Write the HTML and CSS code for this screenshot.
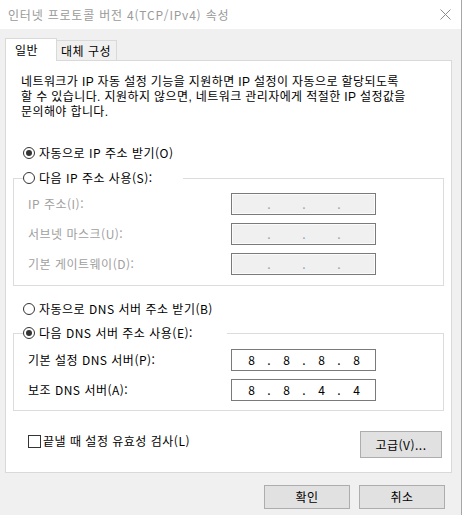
FILE: index.html
```html
<!DOCTYPE html>
<html lang="ko">
<head>
<meta charset="utf-8">
<title>인터넷 프로토콜 버전 4(TCP/IPv4) 속성</title>
<link rel="stylesheet" href="styles.css">
</head>
<body>
<div class="window">
  <div class="titlebar">
    <span class="title">인터넷 프로토콜 버전 4(TCP/IPv4) 속성</span>
    <svg class="close" width="11" height="11" viewBox="0 0 11 11"><path d="M0.5 0.5L10.5 10.5M10.5 0.5L0.5 10.5" stroke="#8c8c8c" stroke-width="1" fill="none"/></svg>
  </div>
  <div class="client">
    <div class="tabs">
      <div class="tab active">일반</div>
      <div class="tab">대체 구성</div>
    </div>
    <div class="panel">
      <div class="desc">
        <div class="desc-line">네트워크가 IP 자동 설정 기능을 지원하면 IP 설정이 자동으로 할당되도록</div>
        <div class="desc-line">할 수 있습니다. 지원하지 않으면, 네트워크 관리자에게 적절한 IP 설정값을</div>
        <div class="desc-line">문의해야 합니다.</div>
      </div>

      <div class="option first"><span class="radio checked"></span><span class="opt-text">자동으로 IP 주소 받기(O)</span></div>

      <fieldset class="group g-ip">
        <legend class="option legend-ip"><span class="radio"></span><span class="opt-text">다음 IP 주소 사용(S):</span></legend>
        <div class="fields">
          <span class="lbl disabled">IP 주소(I):</span>
          <div class="ipbox off"><span class="seg"></span><span class="dot">.</span><span class="seg"></span><span class="dot">.</span><span class="seg"></span><span class="dot">.</span><span class="seg"></span></div>
          <span class="lbl disabled">서브넷 마스크(U):</span>
          <div class="ipbox off"><span class="seg"></span><span class="dot">.</span><span class="seg"></span><span class="dot">.</span><span class="seg"></span><span class="dot">.</span><span class="seg"></span></div>
          <span class="lbl disabled">기본 게이트웨이(D):</span>
          <div class="ipbox off"><span class="seg"></span><span class="dot">.</span><span class="seg"></span><span class="dot">.</span><span class="seg"></span><span class="dot">.</span><span class="seg"></span></div>
        </div>
      </fieldset>

      <div class="option dns-auto"><span class="radio"></span><span class="opt-text">자동으로 DNS 서버 주소 받기(B)</span></div>

      <fieldset class="group g-dns">
        <legend class="option legend-dns"><span class="radio checked"></span><span class="opt-text">다음 DNS 서버 주소 사용(E):</span></legend>
        <div class="fields">
          <span class="lbl">기본 설정 DNS 서버(P):</span>
          <div class="ipbox"><span class="seg">8</span><span class="dot">.</span><span class="seg">8</span><span class="dot">.</span><span class="seg">8</span><span class="dot">.</span><span class="seg">8</span></div>
          <span class="lbl">보조 DNS 서버(A):</span>
          <div class="ipbox"><span class="seg">8</span><span class="dot">.</span><span class="seg">8</span><span class="dot">.</span><span class="seg">4</span><span class="dot">.</span><span class="seg">4</span></div>
        </div>
      </fieldset>

      <div class="bottom-row">
        <label class="check"><span class="box"></span><span class="opt-text">끝낼 때 설정 유효성 검사(L)</span></label>
        <button class="btn adv" type="button">고급(V)...</button>
      </div>
    </div>
    <div class="footer">
      <button class="btn" type="button">확인</button>
      <button class="btn" type="button">취소</button>
    </div>
  </div>
</div>
</body>
</html>
```
FILE: styles.css
```css
* { box-sizing: border-box; }

html, body {
  margin: 0;
  padding: 0;
  background: #f0f0f0;
}

body {
  font-family: "Noto Sans CJK KR", "Noto Sans", sans-serif;
  font-size: 12px;
  letter-spacing: 0.5px;
  color: #000;
  width: 462px;
  height: 515px;
  overflow: hidden;
}

.window {
  width: 462px;
  height: 515px;
  border-right: 1px solid #a6a6a6;
  background: #f0f0f0;
}

.titlebar {
  height: 29px;
  background: #fff;
  display: flex;
  align-items: center;
  justify-content: space-between;
  padding: 0 10px 0 8px;
}

.title {
  color: #9a9a9a;
  font-size: 12px;
  line-height: 16px;
  letter-spacing: 0.8px;
}

.close { display: block; }

.client {
  padding: 9px 9px 0 5px;
}

.tabs {
  display: flex;
  align-items: flex-end;
  height: 22px;
}

.tab {
  line-height: 18px;
  border: 1px solid #d9d9d9;
  border-bottom: none;
  white-space: nowrap;
}

.tab.active {
  width: 52px;
  height: 23px;
  margin-bottom: -1px;
  padding: 2px 0 0 9px;
  background: #fff;
  position: relative;
  z-index: 1;
}

.tab:not(.active) {
  width: 60px;
  height: 20px;
  border-left: none;
  padding: 1px 0 0 4px;
  background: #f0f0f0;
}

.panel {
  width: 447px;
  height: 413px;
  background: #fff;
  border: 1px solid #d9d9d9;
  padding: 14px 0 0 0;
}

.desc {
  margin: 0 0 0 15px;
  font-family: "Liberation Sans", "Noto Sans CJK KR", sans-serif;
  letter-spacing: 0.4px;
}

.desc-line {
  height: 15px;
  line-height: 15px;
  white-space: nowrap;
}

.option {
  display: flex;
  align-items: center;
  height: 16px;
  line-height: 16px;
  white-space: nowrap;
}

.option.first { margin: 25px 0 0 17px; }
.option.dns-auto { margin: 15px 0 0 17px; }

.radio {
  width: 12px;
  height: 12px;
  border: 1px solid #333;
  border-radius: 50%;
  margin-right: 4px;
  flex: none;
  display: flex;
  align-items: center;
  justify-content: center;
  background: #fff;
}

.radio.checked::after {
  content: "";
  width: 6px;
  height: 6px;
  border-radius: 50%;
  background: #333;
}

.group {
  margin: 0 7px 0 7px;
  border: 1px solid #dcdcdc;
  padding: 7px 0 10px 0;
  min-width: 0;
}

.g-ip { margin-top: 9px; }
.g-dns { margin-top: 8px; padding: 8px 0 9px 0; }

legend.option {
  padding: 0;
  margin-left: 9px;
  background: #fff;
}

.legend-ip { width: 160px; }
.legend-dns { width: 204px; }

.fields {
  display: grid;
  grid-template-columns: 203px 145px;
  row-gap: 8px;
  padding-left: 14px;
  align-items: center;
}

.lbl {
  line-height: 16px;
  white-space: nowrap;
}

.lbl.disabled { color: #a0a0a0; }

.ipbox {
  height: 22px;
  border: 1px solid #7a7a7a;
  background: #fff;
  display: flex;
  align-items: center;
  padding-left: 4px;
  line-height: 16px;
  letter-spacing: 0;
}

.ipbox.off {
  background: #f0f0f0;
  box-shadow: inset 0 0 0 1px #fbfbfb;
}

.seg {
  width: 31px;
  text-align: center;
}

.dot {
  width: 4px;
  text-align: center;
}

.ipbox.off .dot { color: #9aa0a8; }

.bottom-row {
  display: flex;
  justify-content: space-between;
  align-items: flex-start;
  margin-top: 20px;
  padding: 0 9px 0 22px;
}

.check {
  display: flex;
  align-items: center;
  margin-top: 3px;
  line-height: 14px;
  white-space: nowrap;
}

.box {
  width: 13px;
  height: 13px;
  border: 1px solid #333;
  background: #fff;
  margin-right: 2px;
  flex: none;
}

.btn {
  font-family: inherit;
  font-size: 12px;
  letter-spacing: 0.5px;
  color: #000;
  background: #e1e1e1;
  border: 1px solid #adadad;
  padding: 0;
  margin: 0;
  line-height: 16px;
  width: 86px;
  height: 24px;
}

.btn.adv {
  width: 82px;
  height: 27px;
}

.footer {
  display: flex;
  justify-content: flex-end;
  gap: 9px;
  margin-top: 12px;
  padding-right: 7px;
}
```
